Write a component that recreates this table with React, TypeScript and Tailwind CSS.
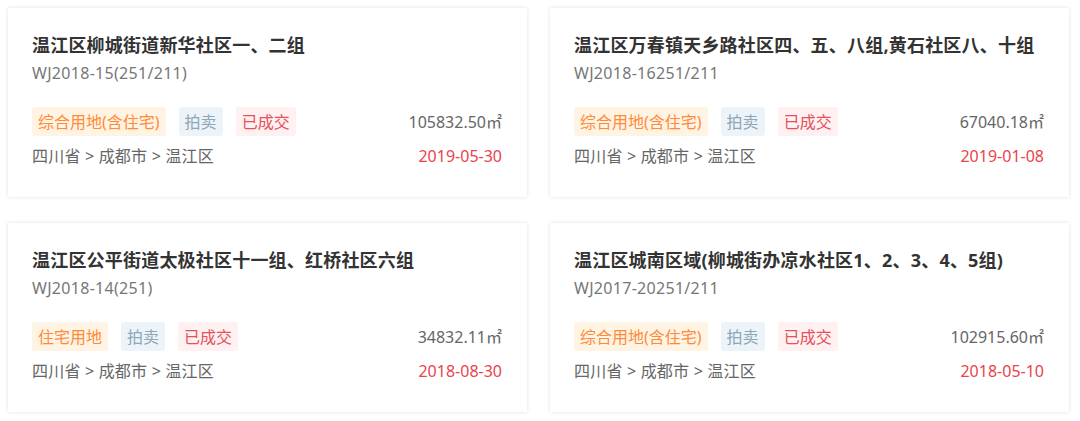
import React from 'react'

type Land = {
  title: string
  code: string
  use: string
  area: string
  date: string
}

const LANDS: Land[] = [
  { title: '温江区柳城街道新华社区一、二组', code: 'WJ2018-15(251/211)', use: '综合用地(含住宅)', area: '105832.50㎡', date: '2019-05-30' },
  { title: '温江区万春镇天乡路社区四、五、八组,黄石社区八、十组', code: 'WJ2018-16251/211', use: '综合用地(含住宅)', area: '67040.18㎡', date: '2019-01-08' },
  { title: '温江区公平街道太极社区十一组、红桥社区六组', code: 'WJ2018-14(251)', use: '住宅用地', area: '34832.11㎡', date: '2018-08-30' },
  { title: '温江区城南区域(柳城街办凉水社区1、2、3、4、5组)', code: 'WJ2017-20251/211', use: '综合用地(含住宅)', area: '102915.60㎡', date: '2018-05-10' },
]

function LandCard({ land }: { land: Land }) {
  return (
    <div className="bg-white shadow-[0_0_4px_rgba(0,0,0,0.12)] pl-6 pr-[25px] pt-[25px] pb-7 h-[189px]">
      <h3 className="text-[18px] leading-6 font-bold text-[#333] tracking-[0.2px]">{land.title}</h3>
      <div className="mt-1 text-[16px] leading-6 text-[#777] tracking-[0.3px]">{land.code}</div>

      {/* tags + area */}
      <div className="mt-[22px] flex items-center justify-between">
        <div className="flex items-center gap-[13px]">
          <span className="h-[29px] px-1.5 flex items-center rounded-[3px] bg-[#fff4e4] text-[#ff8a3a] text-[16px]">{land.use}</span>
          <span className="h-[29px] px-1.5 flex items-center rounded-[3px] bg-[#ecf4f9] text-[#8ea6b8] text-[16px]">拍卖</span>
          <span className="h-[29px] px-1.5 flex items-center rounded-[3px] bg-[#fff0f1] text-[#e5505a] text-[16px]">已成交</span>
        </div>
        <span className="text-[16px] text-[#666]">{land.area}</span>
      </div>

      {/* region + date */}
      <div className="mt-2 flex items-center justify-between text-[16px] leading-6">
        <span className="text-[#666] tracking-[0.2px]">四川省 &gt; 成都市 &gt; 温江区</span>
        <span className="text-[#e8444a]">{land.date}</span>
      </div>
    </div>
  )
}

export default function App() {
  return (
    <div
      className="w-[1080px] h-[421px] bg-white p-2"
      style={{ fontFamily: '"Noto Sans", "Noto Sans CJK SC", sans-serif' }}
    >
      <div className="grid grid-cols-[519px_519px] gap-x-[23px] gap-y-[26px]">
        {LANDS.map(l => (
          <LandCard key={l.code} land={l} />
        ))}
      </div>
    </div>
  )
}
